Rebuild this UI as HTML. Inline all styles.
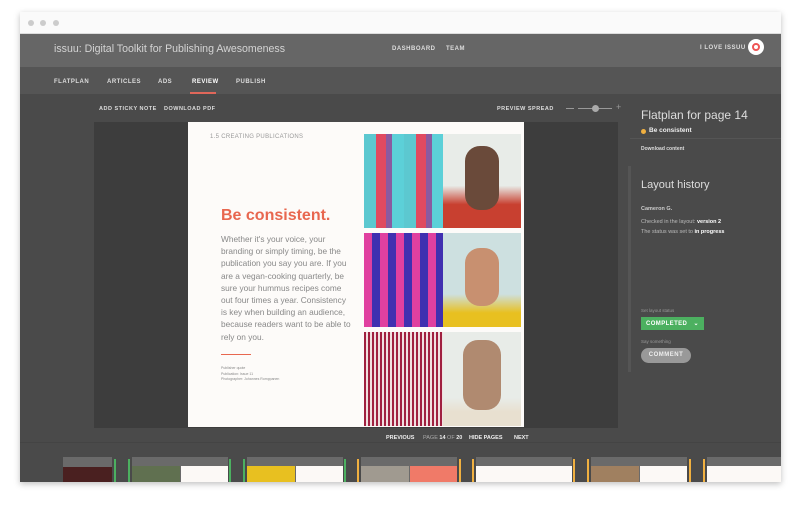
<!DOCTYPE html><html><head><style>
*{margin:0;padding:0;box-sizing:border-box}
body{width:800px;height:505px;background:#fff;font-family:"Liberation Sans",sans-serif;position:relative;overflow:hidden}
.a{position:absolute}
.cap{font-size:6px;letter-spacing:.5px;font-weight:bold;color:#ddd}
</style></head><body>
<div class="a" style="left:20px;top:12px;width:761px;height:470px;background:#4a4a4a;box-shadow:0 2px 6px rgba(0,0,0,.25)"></div>
<div class="a" style="left:20px;top:12px;width:761px;height:22px;background:#fafafa;border-bottom:1px solid #ddd"></div>
<div class="a" style="left:28px;top:20px;width:6px;height:6px;border-radius:3px;background:#ccc"></div>
<div class="a" style="left:40px;top:20px;width:6px;height:6px;border-radius:3px;background:#ccc"></div>
<div class="a" style="left:53px;top:20px;width:6px;height:6px;border-radius:3px;background:#ccc"></div>
<div class="a" style="left:20px;top:34px;width:761px;height:33px;background:#666"></div>
<div class="a" style="left:54px;top:43px;font-size:10.6px;color:#d4d4d4">issuu: Digital Toolkit for Publishing Awesomeness</div>
<div class="a cap" style="left:392px;top:46px">DASHBOARD</div>
<div class="a cap" style="left:446px;top:46px">TEAM</div>
<div class="a cap" style="left:700px;top:45px">I LOVE ISSUU</div>
<div class="a" style="left:748px;top:39px;width:16px;height:16px;border-radius:8px;background:#fff"></div>
<div class="a" style="left:752px;top:43px;width:8px;height:8px;border-radius:4px;border:2px solid #e55"></div>
<div class="a" style="left:20px;top:67px;width:761px;height:27px;background:#555"></div>
<div class="a cap" style="left:54px;top:79px">FLATPLAN</div>
<div class="a cap" style="left:107px;top:79px">ARTICLES</div>
<div class="a cap" style="left:158px;top:79px">ADS</div>
<div class="a cap" style="left:192px;top:79px;color:#fff">REVIEW</div>
<div class="a" style="left:190px;top:92px;width:26px;height:2px;background:#e0675a"></div>
<div class="a cap" style="left:236px;top:79px">PUBLISH</div>
<div class="a cap" style="left:99px;top:106px;font-size:5.5px">ADD STICKY NOTE</div>
<div class="a cap" style="left:164px;top:106px;font-size:5.5px">DOWNLOAD PDF</div>
<div class="a cap" style="left:497px;top:106px;font-size:5.5px">PREVIEW SPREAD</div>
<div class="a" style="left:566px;top:108px;width:8px;height:1px;background:#999"></div>
<div class="a" style="left:578px;top:108px;width:34px;height:1px;background:#999"></div>
<div class="a" style="left:592px;top:105px;width:7px;height:7px;border-radius:4px;background:#aaa"></div>
<div class="a" style="left:616px;top:102px;font-size:9px;color:#999">+</div>
<div class="a" style="left:94px;top:122px;width:524px;height:306px;background:#3d3d3d"></div>
<div class="a" style="left:188px;top:122px;width:336px;height:305px;background:#fdfbf9"></div>
<div class="a" style="left:210px;top:134px;font-size:6px;color:#999;letter-spacing:.3px">1.5 CREATING PUBLICATIONS</div>
<div class="a" style="left:221px;top:207px;font-size:16px;font-weight:bold;color:#e8674f">Be consistent.</div>
<div class="a" style="left:221px;top:233px;width:130px;font-size:8.3px;line-height:12.2px;color:#888">Whether it's your voice, your branding or simply timing, be the publication you say you are. If you are a vegan-cooking quarterly, be sure your hummus recipes come out four times a year. Consistency is key when building an audience, because readers want to be able to rely on you.</div>
<div class="a" style="left:221px;top:354px;width:30px;height:1px;background:#e8674f"></div>
<div class="a" style="left:221px;top:366px;font-size:3.5px;line-height:5.5px;color:#888">Publisher quote<br>Publication: Issue 11<br>Photographer: Johannes Romppanen</div>
<div class="a" style="left:364px;top:134px;width:79px;height:94px;background:repeating-linear-gradient(90deg,#5cc8d0 0 12px,#e04a60 12px 22px,#8a5aa0 22px 28px,#5cd0d8 28px 40px)"></div>
<div class="a" style="left:443px;top:134px;width:78px;height:94px;background:linear-gradient(#e8ece8 0 55%,#c84030 75%)"></div>
<div class="a" style="left:465px;top:146px;width:34px;height:64px;border-radius:15px;background:#6a4a3a"></div>
<div class="a" style="left:364px;top:233px;width:79px;height:94px;background:repeating-linear-gradient(90deg,#e040a0 0 8px,#4030b0 8px 16px)"></div>
<div class="a" style="left:443px;top:233px;width:78px;height:94px;background:linear-gradient(#cde0e0 0 65%,#e8c020 85%)"></div>
<div class="a" style="left:465px;top:248px;width:34px;height:58px;border-radius:15px;background:#c89070"></div>
<div class="a" style="left:364px;top:332px;width:79px;height:94px;background:repeating-linear-gradient(90deg,#a02040 0 2px,#f0e0e0 2px 4px)"></div>
<div class="a" style="left:443px;top:332px;width:78px;height:94px;background:linear-gradient(#e8ece8 0 70%,#e8e0d0 85%)"></div>
<div class="a" style="left:463px;top:340px;width:38px;height:70px;border-radius:15px;background:#b08a70"></div>
<div class="a" style="left:630px;top:94px;width:151px;height:340px;background:#4a4a4a"></div>
<div class="a" style="left:641px;top:108px;font-size:12px;color:#ddd">Flatplan for page 14</div>
<div class="a" style="left:641px;top:129px;width:5px;height:5px;border-radius:3px;background:#f0b040"></div>
<div class="a" style="left:649px;top:127px;font-size:6.5px;font-weight:bold;color:#eee">Be consistent</div>
<div class="a" style="left:630px;top:138px;width:151px;height:1px;background:#555"></div>
<div class="a" style="left:641px;top:146px;font-size:5px;font-weight:bold;color:#ddd">Download content</div>
<div class="a" style="left:628px;top:166px;width:3px;height:206px;background:#555"></div>
<div class="a" style="left:641px;top:179px;font-size:11px;color:#ddd">Layout history</div>
<div class="a" style="left:641px;top:206px;font-size:5.5px;font-weight:bold;color:#ccc">Cameron G.</div>
<div class="a" style="left:641px;top:217px;font-size:5.5px;line-height:10px;color:#bbb">Checked in the layout: <b style="color:#fff">version 2</b><br>The status was set to <b style="color:#fff">in progress</b></div>
<div class="a" style="left:641px;top:308px;font-size:4.5px;color:#999">Set layout status</div>
<div class="a" style="left:641px;top:317px;width:63px;height:13px;background:#4cb060;font-size:6px;font-weight:bold;color:#fff;padding:3px 5px;letter-spacing:.4px">COMPLETED &nbsp;&nbsp;⌄</div>
<div class="a" style="left:641px;top:339px;font-size:4.5px;color:#999">Say something</div>
<div class="a" style="left:641px;top:348px;width:50px;height:15px;border-radius:8px;background:#999;font-size:6px;font-weight:bold;color:#eee;text-align:center;line-height:15px;letter-spacing:.5px">COMMENT</div>
<div class="a" style="left:20px;top:442px;width:761px;height:1px;background:#444"></div>
<div class="a" style="left:386px;top:435px;font-size:5.5px;font-weight:bold;color:#eee">PREVIOUS</div>
<div class="a" style="left:423px;top:435px;font-size:5.5px;color:#aaa">PAGE <b style="color:#eee">14</b> OF <b style="color:#eee">20</b></div>
<div class="a" style="left:469px;top:435px;font-size:5.5px;font-weight:bold;color:#eee">HIDE PAGES</div>
<div class="a" style="left:514px;top:435px;font-size:5.5px;font-weight:bold;color:#eee">NEXT</div>
<div class="a" style="left:63px;top:457px;width:49px;height:25px;background:#6a6a6a"></div><div class="a" style="left:63px;top:467px;width:49px;height:15px;background:#4a2020"></div>
<div class="a" style="left:114px;top:459px;width:2px;height:23px;background:#4cb060"></div>
<div class="a" style="left:128px;top:459px;width:2px;height:23px;background:#4cb060"></div>
<div class="a" style="left:132px;top:457px;width:96px;height:25px;background:#6a6a6a"></div><div class="a" style="left:132px;top:466px;width:48px;height:16px;background:#607050"></div><div class="a" style="left:181px;top:466px;width:47px;height:16px;background:#fcf9f6"></div>
<div class="a" style="left:229px;top:459px;width:2px;height:23px;background:#4cb060"></div>
<div class="a" style="left:243px;top:459px;width:2px;height:23px;background:#4cb060"></div>
<div class="a" style="left:247px;top:457px;width:96px;height:25px;background:#6a6a6a"></div><div class="a" style="left:247px;top:466px;width:48px;height:16px;background:#e8c020"></div><div class="a" style="left:296px;top:466px;width:47px;height:16px;background:#fcf9f6"></div>
<div class="a" style="left:344px;top:459px;width:2px;height:23px;background:#4cb060"></div>
<div class="a" style="left:357px;top:459px;width:2px;height:23px;background:#f0b040"></div>
<div class="a" style="left:361px;top:457px;width:96px;height:25px;background:#6a6a6a"></div><div class="a" style="left:361px;top:466px;width:48px;height:16px;background:#a09a90"></div><div class="a" style="left:410px;top:466px;width:47px;height:16px;background:#f07a68"></div>
<div class="a" style="left:459px;top:459px;width:2px;height:23px;background:#f0b040"></div>
<div class="a" style="left:472px;top:459px;width:2px;height:23px;background:#f0b040"></div>
<div class="a" style="left:476px;top:457px;width:96px;height:25px;background:#6a6a6a"></div><div class="a" style="left:476px;top:466px;width:96px;height:16px;background:#fcf9f6"></div>
<div class="a" style="left:573px;top:459px;width:2px;height:23px;background:#f0b040"></div>
<div class="a" style="left:587px;top:459px;width:2px;height:23px;background:#f0b040"></div>
<div class="a" style="left:591px;top:457px;width:96px;height:25px;background:#6a6a6a"></div><div class="a" style="left:591px;top:466px;width:48px;height:16px;background:#a08060"></div><div class="a" style="left:640px;top:466px;width:47px;height:16px;background:#fcf9f6"></div>
<div class="a" style="left:689px;top:459px;width:2px;height:23px;background:#f0b040"></div>
<div class="a" style="left:703px;top:459px;width:2px;height:23px;background:#f0b040"></div>
<div class="a" style="left:707px;top:457px;width:74px;height:25px;background:#6a6a6a"></div><div class="a" style="left:707px;top:466px;width:74px;height:16px;background:#fcf9f6"></div>
</body></html>
